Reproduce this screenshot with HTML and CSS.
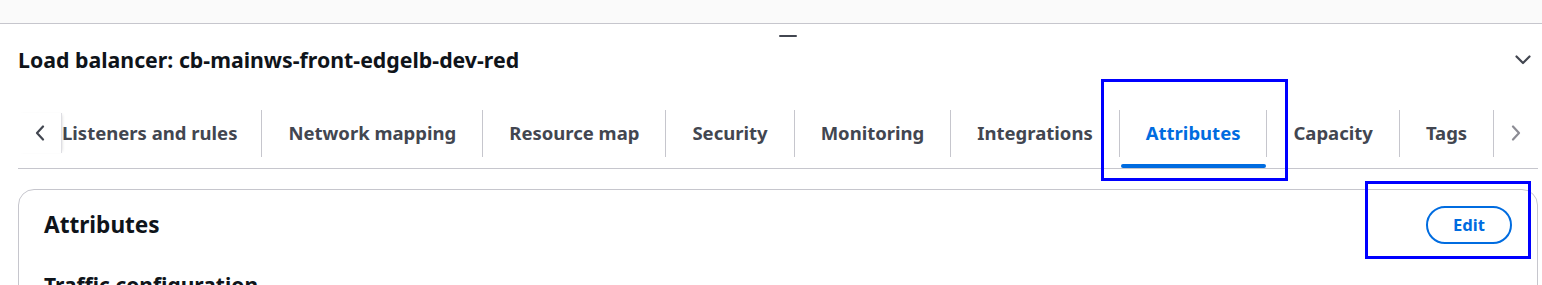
FILE: index.html
```html
<!DOCTYPE html>
<html lang="en">
<head>
<meta charset="utf-8">
<title>Load balancer</title>
<link rel="stylesheet" href="styles.css">
</head>
<body>
<div class="topbar"></div>
<div class="panel">
  <div class="handle-row"><span class="handle"></span></div>
  <div class="title-row">
    <h1 class="title">Load balancer: cb-mainws-front-edgelb-dev-red</h1>
    <svg class="collapse" width="16" height="16" viewBox="0 0 16 16"><path d="M1.5 4.5 L8 11 L14.5 4.5" fill="none" stroke="#424650" stroke-width="2.2" stroke-linecap="round" stroke-linejoin="round"/></svg>
  </div>
  <div class="tabs-row">
    <div class="nav-btn nav-left">
      <svg width="16" height="16" viewBox="0 0 16 16"><path d="M11 1.5 L5 8 L11 14.5" fill="none" stroke="#424650" stroke-width="2.2" stroke-linecap="round" stroke-linejoin="round"/></svg>
    </div>
    <div class="scroller">
      <div class="tabs">
        <div class="tab"><span class="tab-label">Listeners and rules</span><span class="tab-bar"></span></div>
        <div class="tab"><span class="tab-label">Network mapping</span><span class="tab-bar"></span></div>
        <div class="tab"><span class="tab-label">Resource map</span><span class="tab-bar"></span></div>
        <div class="tab"><span class="tab-label">Security</span><span class="tab-bar"></span></div>
        <div class="tab"><span class="tab-label">Monitoring</span><span class="tab-bar"></span></div>
        <div class="tab"><span class="tab-label">Integrations</span><span class="tab-bar"></span></div>
        <div class="tab active"><span class="tab-label">Attributes</span><span class="tab-bar"></span></div>
        <div class="tab"><span class="tab-label">Capacity</span><span class="tab-bar"></span></div>
        <div class="tab"><span class="tab-label">Tags</span><span class="tab-bar"></span></div>
      </div>
    </div>
    <div class="nav-btn nav-right">
      <svg width="16" height="16" viewBox="0 0 16 16"><path d="M5 1.5 L11 8 L5 14.5" fill="none" stroke="#8c8c94" stroke-width="2.2" stroke-linecap="round" stroke-linejoin="round"/></svg>
    </div>
  </div>
  <div class="card">
    <div class="card-header">
      <h2 class="card-title">Attributes</h2>
      <button class="edit-btn">Edit</button>
    </div>
    <h3 class="section-title">Traffic configuration</h3>
  </div>
</div>
<div class="annot annot-tab"></div>
<div class="annot annot-edit"></div>
</body>
</html>
```
FILE: styles.css
```css
* { box-sizing: border-box; }
body {
  margin: 0;
  font-family: "Noto Sans", "Open Sans", sans-serif;
  background: #ffffff;
  color: #0f141a;
  position: relative;
  height: 285px;
  overflow: hidden;
}
.topbar {
  height: 24px;
  background: #fafafa;
  border-bottom: 1px solid #c6c6cd;
}
.panel {
  padding: 0 4px 0 18px;
}
.handle-row {
  display: flex;
  padding: 11px 0 0 761px;
}
.handle {
  width: 18px;
  height: 2px;
  border-radius: 1px;
  background: #424650;
}
.title-row {
  display: flex;
  justify-content: space-between;
  align-items: center;
  height: 28px;
  margin-top: 9px;
}
.title {
  margin: 0;
  font-size: 21.3px;
  font-weight: 700;
  line-height: 28px;
  color: #0f141a;
  white-space: nowrap;
}
.collapse {
  margin-right: 7px;
}
.tabs-row {
  display: flex;
  margin-top: 30px;
  border-bottom: 1px solid #c6c6cd;
}
.nav-btn {
  width: 44px;
  flex-shrink: 0;
  height: 40px;
  margin-top: 9px;
  display: flex;
  align-items: center;
  justify-content: center;
}
.nav-left {
  border-right: 1px solid #dedee3;
  box-shadow: 2px 0 3px -2px rgba(0, 0, 0, 0.18);
  position: relative;
  z-index: 1;
}
.scroller {
  flex: 1;
  overflow: hidden;
  display: flex;
  padding-top: 6px;
}
.tabs {
  display: flex;
  margin-left: -26px;
}
.tab {
  display: flex;
  flex-direction: column;
  flex-shrink: 0;
}
.tab-label {
  height: 47px;
  padding: 0 26px 2px 26px;
  border-right: 1px solid #c6c6cd;
  display: flex;
  align-items: center;
  font-size: 18.5px;
  font-weight: 700;
  color: #424650;
  white-space: nowrap;
}
.tab:first-child .tab-label {
  padding-right: 24px;
}
.tab-bar {
  height: 4px;
  margin: 7px 1px 0;
  border-radius: 2px;
}
.tab.active .tab-label {
  color: #006ce0;
}
.tab.active .tab-bar {
  background: #006ce0;
}
.card {
  margin-top: 20px;
  border: 1px solid #c6c6cd;
  border-radius: 16px;
  padding: 16px 25px;
  height: 220px;
}
.card-header {
  display: flex;
  justify-content: space-between;
  align-items: center;
}
.card-title {
  margin: 0;
  font-size: 22.6px;
  font-weight: 700;
  line-height: 30px;
  color: #0f141a;
}
.edit-btn {
  width: 86px;
  height: 38px;
  border: 2px solid #006ce0;
  border-radius: 20px;
  background: #ffffff;
  color: #006ce0;
  font-family: "Noto Sans", "Open Sans", sans-serif;
  font-size: 16.6px;
  font-weight: 700;
  padding: 0 0 1px;
}
.section-title {
  margin: 28px 0 0;
  font-size: 21px;
  font-weight: 700;
  line-height: 26px;
  color: #0f141a;
}
.annot {
  position: absolute;
  border: 3px solid #0000ff;
}
.annot-tab {
  left: 1101px;
  top: 79px;
  width: 187px;
  height: 102px;
}
.annot-edit {
  left: 1365px;
  top: 181px;
  width: 166px;
  height: 78px;
}
```
